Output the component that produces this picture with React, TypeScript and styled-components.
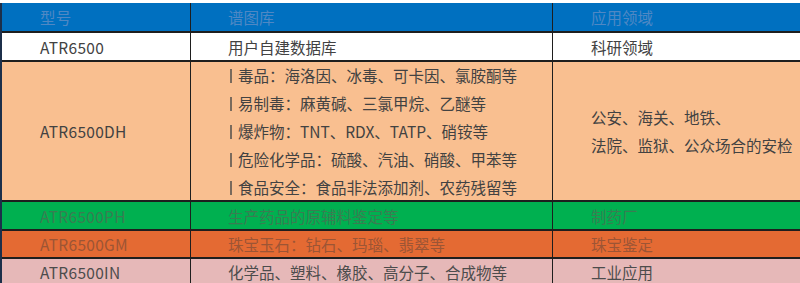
import React from 'react'
import styled, { createGlobalStyle } from 'styled-components'

const GlobalStyle = createGlobalStyle`
  html, body {
    margin: 0;
    padding: 0;
    background: #ffffff;
  }
  body {
    font-family: 'Noto Sans CJK SC', 'Noto Sans', sans-serif;
  }
`

const Table = styled.div`
  margin-top: 3px;
  width: 800px;
  border-left: 2px solid #1c2f4a;
  box-sizing: border-box;
`

const Row = styled.div<{ $bg: string; $color: string; $h: number }>`
  display: grid;
  grid-template-columns: 189px 362px 1fr;
  height: ${(p) => p.$h}px;
  box-sizing: border-box;
  background: ${(p) => p.$bg};
  color: ${(p) => p.$color};
  border-bottom: 2px solid #1e1e1e;
  font-size: 15.5px;
`

const Cell = styled.div`
  display: flex;
  flex-direction: column;
  justify-content: center;
  padding-left: 38px;
  border-right: 1.5px solid #1e1e1e;
  line-height: 28px;
  white-space: nowrap;
  overflow: hidden;

  &:nth-child(2) {
    padding-left: 37px;
  }
  &:last-child {
    border-right: none;
  }
`

const Latin = styled.span`
  letter-spacing: 0.3px;
`

const Bullet = styled.span`
  display: inline-block;
  width: 2px;
  height: 14px;
  background: #7a6a5c;
  margin: 0 6px 0 2px;
  vertical-align: -1px;
`

const rows = [
  {
    bg: '#0070c0',
    color: '#4f88c4',
    h: 30,
    cells: ['型号', '谱图库', '应用领域'],
  },
  {
    bg: '#ffffff',
    color: '#424242',
    h: 29,
    cells: ['ATR6500', '用户自建数据库', '科研领域'],
  },
]

const dhList = [
  '毒品：海洛因、冰毒、可卡因、氯胺酮等',
  '易制毒：麻黄碱、三氯甲烷、乙醚等',
  '爆炸物：TNT、RDX、TATP、硝铵等',
  '危险化学品：硫酸、汽油、硝酸、甲苯等',
  '食品安全：食品非法添加剂、农药残留等',
]

const tailRows = [
  {
    bg: '#00b050',
    color: '#3a7d52',
    h: 29,
    cells: ['ATR6500PH', '生产药品的原辅料鉴定等', '制药厂'],
  },
  {
    bg: '#e46a33',
    color: '#9c5535',
    h: 28,
    cells: ['ATR6500GM', '珠宝玉石：钻石、玛瑙、翡翠等', '珠宝鉴定'],
  },
  {
    bg: '#e6b8b8',
    color: '#4c4c4c',
    h: 28,
    cells: ['ATR6500IN', '化学品、塑料、橡胶、高分子、合成物等', '工业应用'],
  },
]

export default function App() {
  return (
    <>
      <GlobalStyle />
      <Table>
        {rows.map((r, i) => (
          <Row key={i} $bg={r.bg} $color={r.color} $h={r.h}>
            <Cell>
              <Latin>{r.cells[0]}</Latin>
            </Cell>
            <Cell>{r.cells[1]}</Cell>
            <Cell>{r.cells[2]}</Cell>
          </Row>
        ))}
        <Row $bg='#f9bf90' $color='#424242' $h={140}>
          <Cell>
            <Latin>ATR6500DH</Latin>
          </Cell>
          <Cell>
            {dhList.map((t) => (
              <div key={t}>
                <Bullet />
                {t}
              </div>
            ))}
          </Cell>
          <Cell>
            <div>公安、海关、地铁、</div>
            <div>法院、监狱、公众场合的安检</div>
          </Cell>
        </Row>
        {tailRows.map((r) => (
          <Row key={r.cells[0]} $bg={r.bg} $color={r.color} $h={r.h}>
            <Cell>
              <Latin>{r.cells[0]}</Latin>
            </Cell>
            <Cell>{r.cells[1]}</Cell>
            <Cell>{r.cells[2]}</Cell>
          </Row>
        ))}
      </Table>
    </>
  )
}
